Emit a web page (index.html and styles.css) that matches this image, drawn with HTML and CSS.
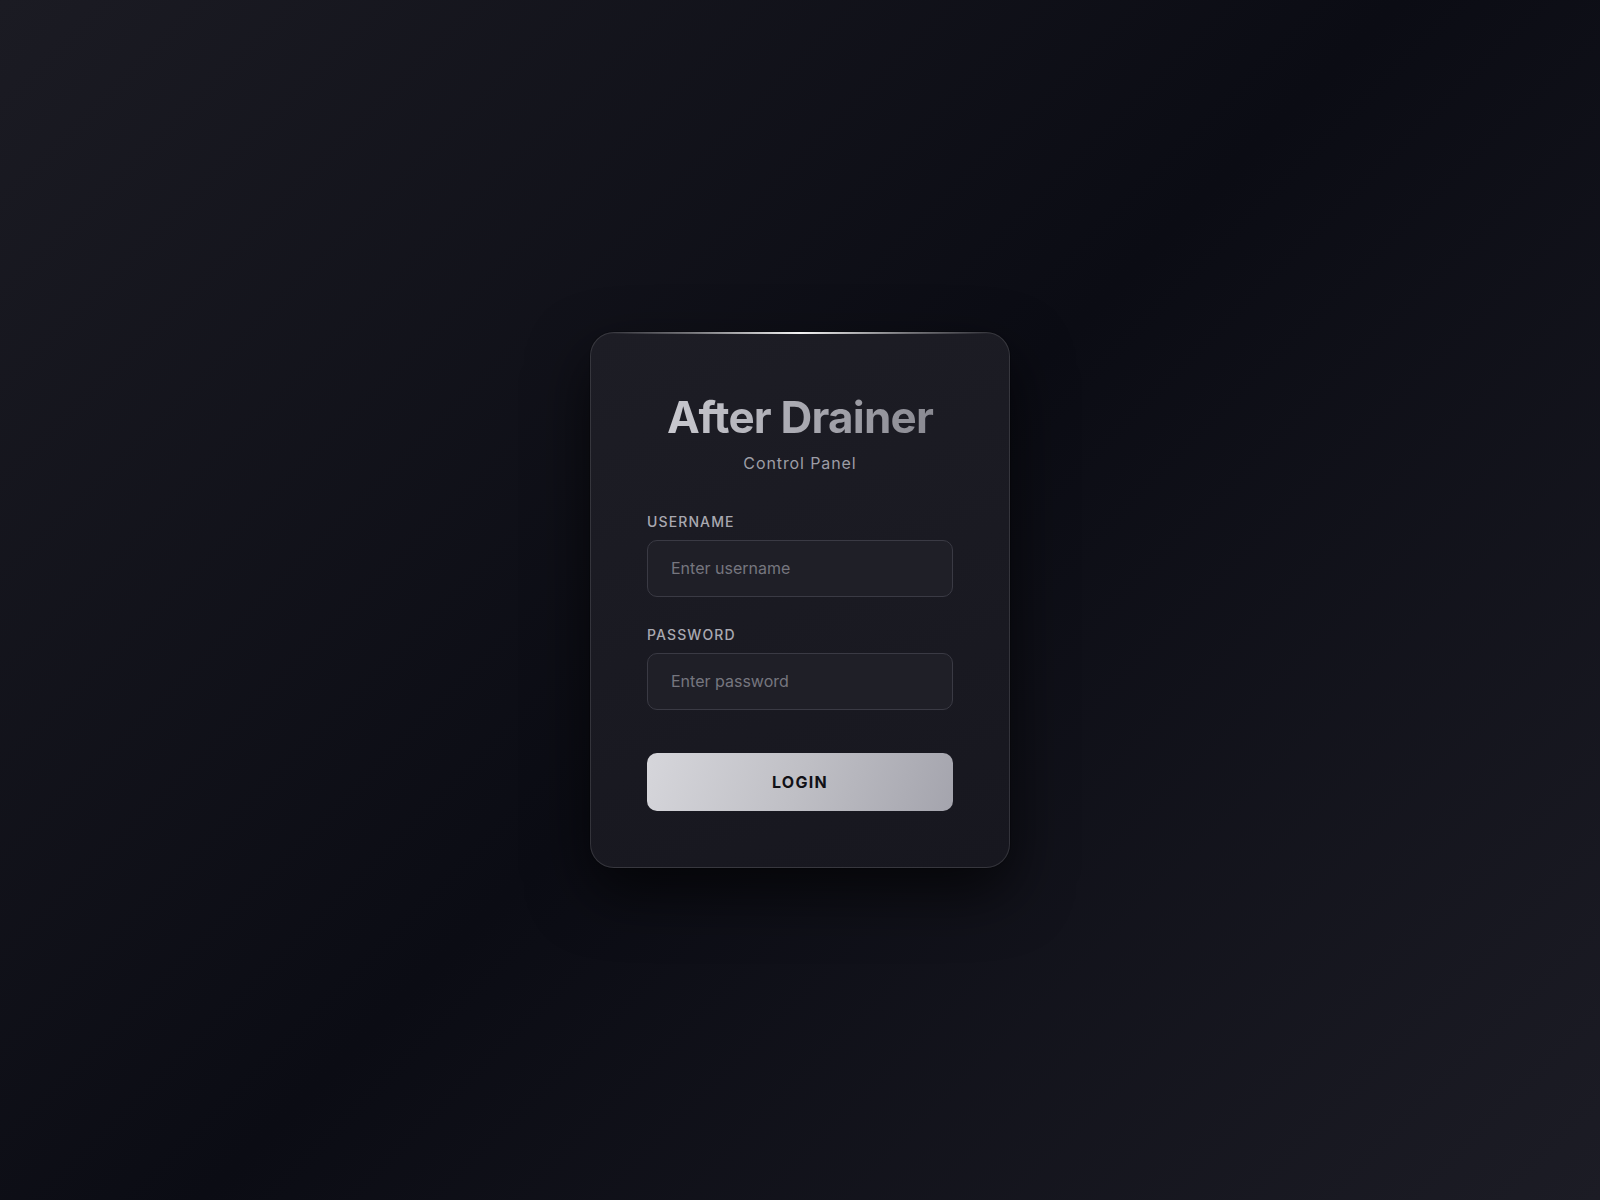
FILE: index.html
```html
<!DOCTYPE html>
<html lang="en">
<head>
<meta charset="utf-8">
<title>After Drainer - Control Panel</title>
<link rel="stylesheet" href="styles.css">
</head>
<body>
<main class="page">
  <form class="card">
    <header class="card-header">
      <h1 class="title">After Drainer</h1>
      <p class="subtitle">Control Panel</p>
    </header>
    <div class="field">
      <label class="label" for="username">USERNAME</label>
      <input class="input" id="username" type="text" placeholder="Enter username">
    </div>
    <div class="field">
      <label class="label" for="password">PASSWORD</label>
      <input class="input" id="password" type="password" placeholder="Enter password">
    </div>
    <button class="btn" type="button">LOGIN</button>
  </form>
</main>
</body>
</html>
```
FILE: styles.css
```css
* { box-sizing: border-box; }
html, body { margin: 0; padding: 0; height: 100%; }
body {
  font-family: Inter, "Noto Sans", "Liberation Sans", sans-serif;
  background: linear-gradient(135deg, #1b1b23 0%, #0b0c14 50%, #1c1c25 100%);
  color: #d0d0d6;
}
.page {
  min-height: 100vh;
  display: flex;
  align-items: center;
  justify-content: center;
}
.card {
  position: relative;
  width: 420px;
  padding: 58px 56px 56px;
  border-radius: 24px;
  border: 1px solid rgba(255,255,255,0.12);
  background: linear-gradient(160deg, #1d1d25 0%, #17171f 100%);
  box-shadow: 0 24px 60px rgba(0,0,0,0.65), 0 0 0 1px rgba(0,0,0,0.2);
}
.card::before {
  content: "";
  position: absolute;
  top: -1px;
  left: 16px;
  right: 16px;
  height: 2px;
  background: linear-gradient(90deg, rgba(255,255,255,0) 0%, rgba(255,255,255,0.35) 22%, rgba(255,255,255,0.95) 50%, rgba(255,255,255,0.35) 78%, rgba(255,255,255,0) 100%);
}
.card-header {
  text-align: center;
  margin-bottom: 36px;
}
.title {
  margin: 0;
  font-size: 44px;
  line-height: 1.2;
  font-weight: 700;
  letter-spacing: -0.8px;
  background: linear-gradient(90deg, #cdcdd3 0%, #a9a9b1 50%, #85858d 100%);
  -webkit-background-clip: text;
  background-clip: text;
  color: transparent;
}
.subtitle {
  margin: 7px 0 0;
  font-size: 16px;
  line-height: 1.5;
  letter-spacing: 0.9px;
  color: #9d9da6;
}
.field { margin-bottom: 27px; }
.label {
  display: block;
  font-size: 14px;
  line-height: 1.5;
  font-weight: 500;
  letter-spacing: 0.08em;
  color: #a9a9b1;
  margin-bottom: 8px;
}
.input {
  display: block;
  width: 100%;
  padding: 16px 23px;
  font-family: inherit;
  font-size: 16px;
  line-height: 1.45;
  color: #d0d0d6;
  background: #1f1f27;
  border: 1px solid #3a3a44;
  border-radius: 10px;
  outline: none;
}
.input::placeholder { color: #76767f; }
.btn {
  display: block;
  width: 100%;
  margin-top: 43px;
  height: 58px;
  border: none;
  border-radius: 10px;
  font-family: inherit;
  font-size: 16px;
  font-weight: 700;
  letter-spacing: 1.3px;
  color: #111117;
  background: linear-gradient(110deg, #d6d6db 0%, #bfbfc5 50%, #a4a4ad 100%);
  cursor: pointer;
}
```
